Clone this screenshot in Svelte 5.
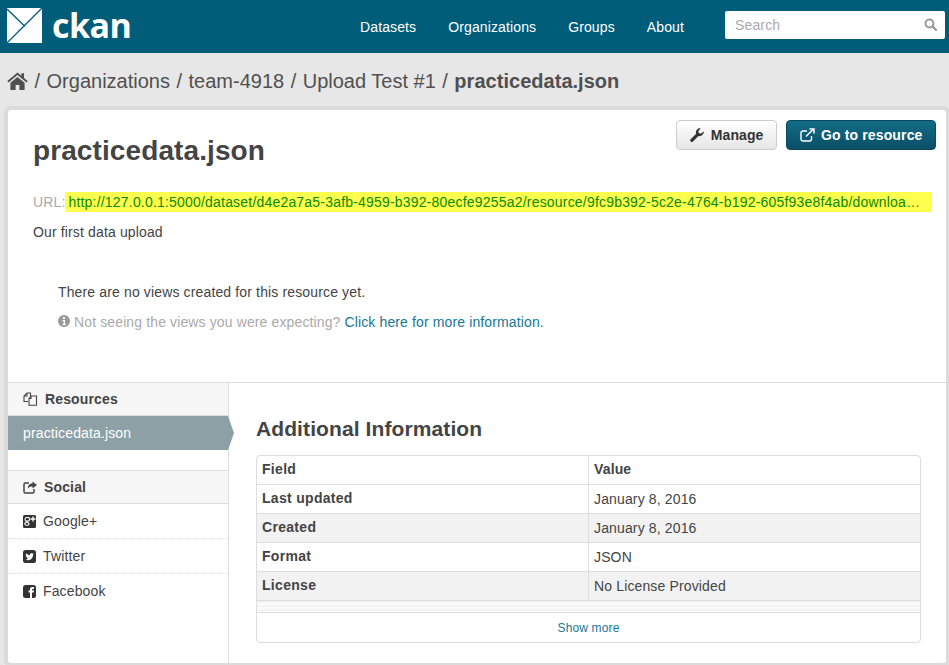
<script>
  const navItems = ['Datasets', 'Organizations', 'Groups', 'About'];
  const crumbs = ['Organizations', 'team-4918', 'Upload Test #1'];
  const rows = [
    ['Field', 'Value'],
    ['Last updated', 'January 8, 2016'],
    ['Created', 'January 8, 2016'],
    ['Format', 'JSON'],
    ['License', 'No License Provided']
  ];
  const url = 'http://127.0.0.1:5000/dataset/d4e2a7a5-3afb-4959-b392-80ecfe9255a2/resource/9fc9b392-5c2e-4764-b192-605f93e8f4ab/download/practicedata.json';
</script>

<div class="page">
  <header class="masthead">
    <a class="logo" href="#top">
      <svg width="35" height="35" viewBox="0 0 35 35"><rect width="35" height="35" fill="#fff"/><path d="M0 1L18 18.500M35 0L0 35" fill="none" stroke="#005d7a" stroke-width="1.300"/></svg>
      <span class="wordmark">ckan</span>
    </a>
    <nav class="nav">
      {#each navItems as item}
        <a href="#top">{item}</a>
      {/each}
    </nav>
    <div class="search">
      <span>Search</span>
      <svg width="13" height="13" viewBox="0 0 13 13" fill="none" stroke="#999" stroke-width="2"><circle cx="5.500" cy="5.500" r="4"/><path d="M8.500 8.500L12 12" stroke-width="2.400" stroke-linecap="round"/></svg>
    </div>
  </header>

  <div class="toolbar">
    <svg class="home" width="21" height="18" viewBox="0 0 21 18"><path d="M10.500 0.500L0.300 9l1.200 1.400L10.500 3l9 7.400L20.700 9 17 5.900V1.200h-2.600v2.500zM3.400 10.800V18h5.200v-5h3.800v5h5.200v-7.200l-7.100-5.800z" fill="#505050"/></svg>
    {#each crumbs as crumb}
      <span class="sep">/</span><a href="#top">{crumb}</a>
    {/each}
    <span class="sep">/</span><strong>practicedata.json</strong>
  </div>

  <main class="card">
    <section class="resource">
      <div class="actions">
        <a class="btn" href="#top">
          <svg width="14" height="14" viewBox="0 0 14 14"><path d="M13.600 3.300a4 4 0 0 1-5.200 4.600L3 13.400a1.400 1.400 0 0 1-2.300-2.200L6.200 5.800A4 4 0 0 1 10.800.4L8.300 3l.5 2.100 2.200.6z" fill="#333"/></svg>
          Manage
        </a>
        <a class="btn primary" href="#top">
          <svg width="15" height="14" viewBox="0 0 15 14" fill="none" stroke="#fff" stroke-width="1.400"><path d="M11.500 8v3a2 2 0 0 1-2 2H3a2 2 0 0 1-2-2V5a2 2 0 0 1 2-2h4"/><path d="M6 8.500L13 1.500"/><path d="M9.500 1h4.500v4.500" stroke-width="1.500"/></svg>
          Go to resource
        </a>
      </div>
      <h1>practicedata.json</h1>
      <p class="url-row"><span class="url-label">URL:</span><a class="url" href="#top">{url}</a></p>
      <p class="desc">Our first data upload</p>
      <div class="no-views">
        <p>There are no views created for this resource yet.</p>
        <p class="muted">
          <svg width="12" height="12" viewBox="0 0 12 12"><circle cx="6" cy="6" r="6" fill="#999"/><rect x="5" y="2" width="2" height="2" fill="#fff"/><path d="M4.500 5h2.500v4h1v1H4.500V9h1V6h-1z" fill="#fff"/></svg>
          Not seeing the views you were expecting? <a href="#top">Click here for more information.</a>
        </p>
      </div>
    </section>

    <div class="lower">
      <aside class="sidebar">
        <h2 class="side-head first">
          <svg width="15" height="14" viewBox="0 0 15 14" fill="none" stroke="#444" stroke-width="1.100"><path d="M5 9.500H1V4l3-3h3.500v3"/><path d="M4 1v3H1"/><path d="M8 4h5.500v9.300H6V6.500z"/><path d="M8 4v2.500H6"/></svg>
          Resources
        </h2>
        <a class="active" href="#top">practicedata.json</a>
        <h2 class="side-head social">
          <svg width="14" height="13" viewBox="0 0 14 13"><path d="M9.500 0.500L14 4l-4.500 3.500V5.500C7 5.500 5.500 6 5 8 4.500 5 6 2.500 9.500 2.500z" fill="#444"/><path d="M11 8v2.500a1.500 1.500 0 0 1-1.500 1.500H2.500A1.500 1.500 0 0 1 1 10.500V3.500A1.500 1.500 0 0 1 2.500 2H6" fill="none" stroke="#444" stroke-width="1.500"/></svg>
          Social
        </h2>
        <ul class="social-list">
          <li>
            <svg width="13" height="13" viewBox="0 0 13 13"><rect width="13" height="13" rx="1.500" fill="#333"/><path d="M6.500 2.500H3.800a1.800 1.800 0 0 0 0 3.600h1M4.800 2.500a1.800 1.800 0 0 1 0 3.600M4 7c-1.800.3-2.400 1.300-2.200 2.200.3 1.400 3.800 1.500 4.200.2C6.400 8 4.500 7.800 4.200 6.800" stroke="#fff" stroke-width="1.100" fill="none"/><path d="M10 1.500v5M7.500 4h5" stroke="#fff" stroke-width="1.300"/></svg>
            Google+
          </li>
          <li>
            <svg width="13" height="13" viewBox="0 0 13 13"><rect width="13" height="13" rx="2.500" fill="#333"/><path d="M2.500 9.500c3 1.500 7.500.5 7.500-5l1-1-1.300.3c-1-1-3-.3-2.700 1.300C5.500 5 4 4.200 3 3.200c-.5 1 0 2 .6 2.500l-.8-.2c0 1 .7 1.700 1.500 1.900l-.7.100c.2.700.8 1.100 1.500 1.200-.7.500-1.600.9-2.600.8z" fill="#fff"/></svg>
            Twitter
          </li>
          <li>
            <svg width="13" height="13" viewBox="0 0 13 13"><rect width="13" height="13" rx="2.500" fill="#333"/><path d="M7 13V7.500H5.500V5.500H7V4.200C7 2.700 8 2 9.200 2H11v2H9.800c-.5 0-.8.300-.8.800v.7h2L10.700 7.500H9V13z" fill="#fff"/></svg>
            Facebook
          </li>
        </ul>
      </aside>

      <section class="info">
        <h3>Additional Information</h3>
        <div class="table">
          {#each rows as row, i}
            <div class="row" class:odd={i % 2 === 0 && i > 0} class:head={i === 0}>
              <div class="cell key">{row[0]}</div>
              <div class="cell">{row[1]}</div>
            </div>
          {/each}
          <div class="fade"></div>
          <a class="more" href="#top">Show more</a>
        </div>
      </section>
    </div>
  </main>
</div>

<style>
  :global(html), :global(body) {
    margin: 0;
    height: 100%;
    overflow: hidden;
  }

  .page {
    height: 665px;
    overflow: hidden;
    background: #e7e7e7;
    font-family: "Liberation Sans", Arial, sans-serif;
    font-size: 14px;
    line-height: 20px;
    letter-spacing: 0.14px;
    color: #444;
  }

  a {
    text-decoration: none;
  }

  .masthead {
    display: flex;
    align-items: center;
    height: 53px;
    background: #005d7a;
    padding-left: 7px;
  }

  .logo {
    display: flex;
    align-items: center;
    gap: 10px;
    width: 353px;
    margin-top: -2px;
    color: #fff;
  }

  .wordmark {
    font-family: "Open Sans", sans-serif;
    font-size: 34px;
    line-height: 34px;
    font-weight: 700;
    letter-spacing: -0.5px;
    position: relative;
    top: -1px;
  }

  .nav {
    display: flex;
    gap: 32px;
    flex: 1;
    letter-spacing: 0.12px;
  }

  .nav a {
    color: #fff;
  }

  .search {
    display: flex;
    align-items: center;
    justify-content: space-between;
    box-sizing: border-box;
    width: 220px;
    height: 28px;
    margin: -4px 4px 0 0;
    padding: 0 8px 0 10px;
    background: #fff;
    border-radius: 2px;
    color: #aaa;
  }

  .toolbar {
    display: flex;
    align-items: center;
    height: 55px;
    margin-bottom: 2px;
    padding-left: 7px;
    font-size: 20px;
    letter-spacing: 0;
    color: #505050;
  }

  .toolbar a {
    color: #505050;
  }

  .toolbar strong {
    letter-spacing: 0.03px;
  }

  .sep {
    margin: 0 6.500px;
  }

  .card {
    box-sizing: border-box;
    height: 553px;
    margin: 0 3px 0 8px;
    background: #fff;
    border-radius: 3px;
    box-shadow: 0 0 0 4px rgba(0, 0, 0, 0.05);
    overflow: hidden;
  }

  .resource {
    position: relative;
    box-sizing: border-box;
    height: 273px;
    padding: 23px 25px 0;
    border-bottom: 1px solid #ddd;
  }

  .actions {
    position: absolute;
    top: 10px;
    right: 10px;
    display: flex;
    gap: 9px;
  }

  .btn {
    display: flex;
    align-items: center;
    gap: 7px;
    box-sizing: border-box;
    height: 30px;
    padding: 0 13px;
    border: 1px solid #ccc;
    border-radius: 4px;
    background: linear-gradient(#fff, #e6e6e6);
    color: #333;
    font-weight: bold;
    letter-spacing: 0.08px;
  }

  .btn.primary {
    gap: 6px;
    padding: 0 12.500px;
    border-color: #0a4a5c;
    background: linear-gradient(#136c86, #0a4f66);
    color: #fff;
    letter-spacing: 0.14px;
  }

  h1 {
    margin: 0;
    font-size: 28px;
    line-height: 36px;
    letter-spacing: 0.1px;
    font-weight: bold;
    color: #444;
  }

  .url-row {
    display: flex;
    margin: 23px -11px 0 0;
  }

  .url-label {
    color: #aaa;
  }

  .url {
    flex: 1;
    min-width: 0;
    padding: 0 9px 0 3px;
    overflow: hidden;
    white-space: nowrap;
    text-overflow: ellipsis;
    letter-spacing: 0.195px;
    background: #ffff4d;
    color: #0a8a00;
  }

  .desc {
    margin: 10px 0 0;
  }

  .no-views {
    margin: 40px 0 0 25px;
  }

  .no-views p {
    margin: 0 0 10px;
  }

  .no-views .muted {
    color: #aaa;
    letter-spacing: 0.125px;
  }

  .no-views a {
    color: #187794;
  }

  .lower {
    display: flex;
    height: 280px;
  }

  .sidebar {
    box-sizing: border-box;
    width: 221px;
    border-right: 1px solid #ddd;
    flex-shrink: 0;
  }

  .side-head {
    display: flex;
    align-items: center;
    gap: 7px;
    box-sizing: border-box;
    margin: 0;
    height: 33px;
    padding-left: 15px;
    background: #f6f6f6;
    border-bottom: 1px solid #ddd;
    font-size: 14px;
    font-weight: bold;
    color: #444;
  }

  .side-head.social {
    height: 34px;
    margin-top: 20px;
    border-top: 1px solid #ddd;
  }

  .active {
    position: relative;
    display: block;
    height: 34px;
    line-height: 34px;
    padding-left: 15px;
    background: #8ca0a6;
    color: #fff;
  }

  .active::after {
    content: '';
    position: absolute;
    top: 0;
    right: -6px;
    border-left: 6px solid #8ca0a6;
    border-top: 17px solid transparent;
    border-bottom: 17px solid transparent;
  }

  .social-list {
    list-style: none;
    margin: 0;
    padding: 0;
  }

  .social-list li {
    display: flex;
    align-items: center;
    gap: 7px;
    height: 35px;
    box-sizing: border-box;
    padding-left: 15px;
    border-bottom: 1px dotted #ddd;
  }

  .social-list li:last-child {
    border-bottom-color: transparent;
  }

  .info {
    flex: 1;
    min-width: 0;
    padding: 32px 25px 0 27px;
  }

  h3 {
    margin: 0 0 12px;
    font-size: 21px;
    line-height: 28px;
    letter-spacing: 0.1px;
    font-weight: bold;
    color: #444;
  }

  .table {
    border: 1px solid #ddd;
    border-radius: 4px;
  }

  .row {
    display: grid;
    grid-template-columns: 332px 1fr;
    height: 29px;
    box-sizing: border-box;
    border-bottom: 1px solid #ddd;
    line-height: 28px;
  }

  .row.odd {
    background: #f2f2f2;
  }

  .row.head .cell {
    font-weight: bold;
    line-height: 26px;
  }

  .cell {
    padding-left: 5px;
  }

  .cell.key {
    font-weight: bold;
    line-height: 26px;
    letter-spacing: 0.3px;
    border-right: 1px solid #ddd;
  }

  .fade {
    height: 11px;
    background: repeating-linear-gradient(#f3f3f3 0 2px, #fbfbfb 2px 4px);
    border-bottom: 1px solid #ddd;
  }

  .more {
    display: block;
    text-align: center;
    height: 29px;
    line-height: 30px;
    font-size: 12px;
    color: #187794;
  }
</style>
